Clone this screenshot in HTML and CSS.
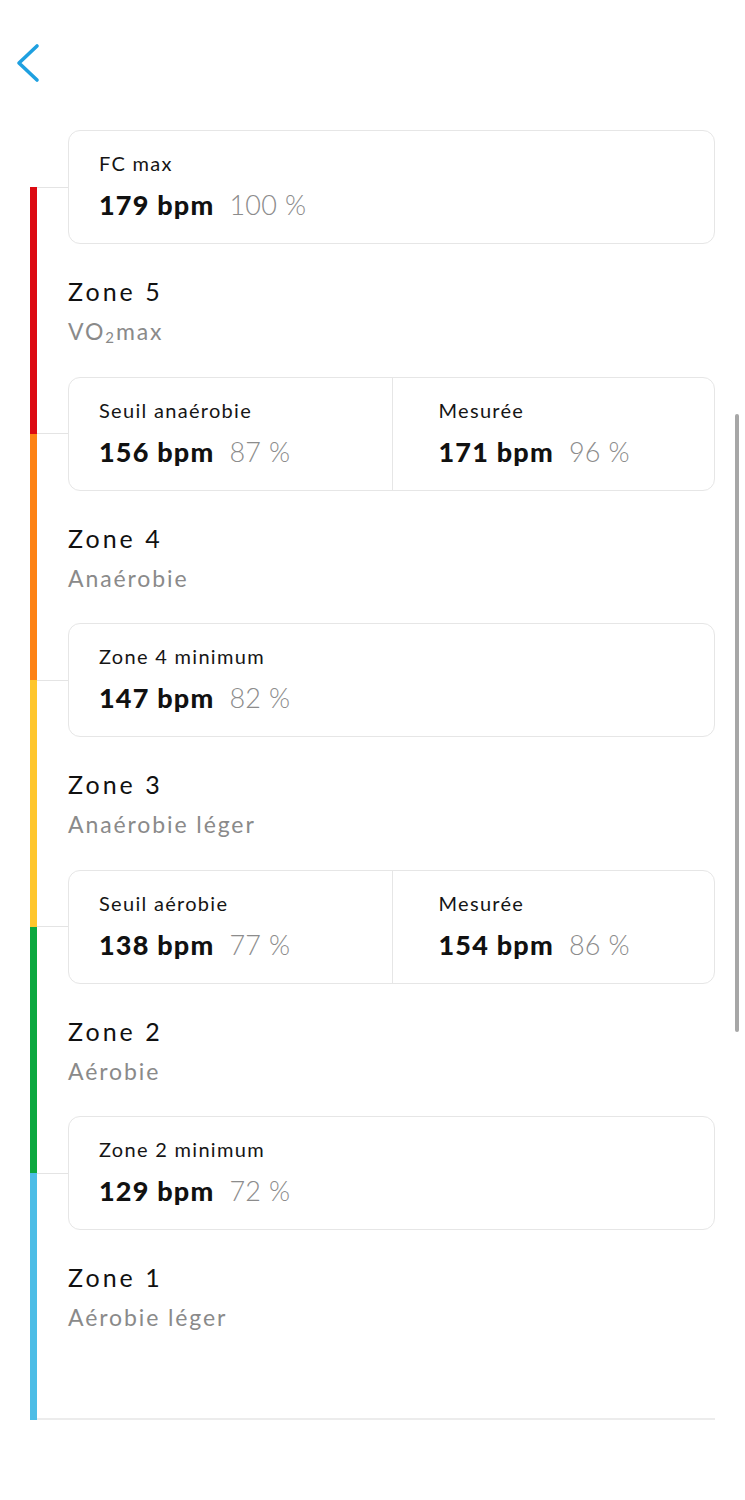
FILE: index.html
```html
<!DOCTYPE html>
<html lang="fr">
<head>
<meta charset="utf-8">
<title>Zones de fréquence cardiaque</title>
<link rel="stylesheet" href="styles.css">
</head>
<body>
<div class="screen">
  <header class="topbar">
    <button class="back" aria-label="Retour">
      <svg width="26" height="40" viewBox="0 0 26 40"><polyline points="22,3 4,20 22,37" fill="none" stroke="#1ea0e0" stroke-width="3.6" stroke-linecap="round" stroke-linejoin="round"/></svg>
    </button>
  </header>

  <section class="zones">
    <div class="row">
      <div class="rail a-none b-5"></div><div class="link"></div>
      <div class="card">
        <div class="cell"><div class="label">FC max</div><div class="value"><b>179 bpm</b><span class="pct">100 %</span></div></div>
      </div>
    </div>
    <div class="row">
      <div class="rail a-5 b-5"></div><div class="gap"></div>
      <div class="zone-head"><div class="zone-title">Zone 5</div><div class="zone-sub">VO<sub>2</sub>max</div></div>
    </div>
    <div class="row">
      <div class="rail a-5 b-4"></div><div class="link"></div>
      <div class="card">
        <div class="cell"><div class="label">Seuil anaérobie</div><div class="value"><b>156 bpm</b><span class="pct">87 %</span></div></div>
        <div class="cell"><div class="label">Mesurée</div><div class="value"><b>171 bpm</b><span class="pct">96 %</span></div></div>
      </div>
    </div>
    <div class="row">
      <div class="rail a-4 b-4"></div><div class="gap"></div>
      <div class="zone-head"><div class="zone-title">Zone 4</div><div class="zone-sub">Anaérobie</div></div>
    </div>
    <div class="row">
      <div class="rail a-4 b-3"></div><div class="link"></div>
      <div class="card">
        <div class="cell"><div class="label">Zone 4 minimum</div><div class="value"><b>147 bpm</b><span class="pct">82 %</span></div></div>
      </div>
    </div>
    <div class="row">
      <div class="rail a-3 b-3"></div><div class="gap"></div>
      <div class="zone-head"><div class="zone-title">Zone 3</div><div class="zone-sub">Anaérobie léger</div></div>
    </div>
    <div class="row">
      <div class="rail a-3 b-2"></div><div class="link"></div>
      <div class="card">
        <div class="cell"><div class="label">Seuil aérobie</div><div class="value"><b>138 bpm</b><span class="pct">77 %</span></div></div>
        <div class="cell"><div class="label">Mesurée</div><div class="value"><b>154 bpm</b><span class="pct">86 %</span></div></div>
      </div>
    </div>
    <div class="row">
      <div class="rail a-2 b-2"></div><div class="gap"></div>
      <div class="zone-head"><div class="zone-title">Zone 2</div><div class="zone-sub">Aérobie</div></div>
    </div>
    <div class="row">
      <div class="rail a-2 b-1"></div><div class="link"></div>
      <div class="card">
        <div class="cell"><div class="label">Zone 2 minimum</div><div class="value"><b>129 bpm</b><span class="pct">72 %</span></div></div>
      </div>
    </div>
    <div class="row">
      <div class="rail a-1 b-1"></div><div class="gap"></div>
      <div class="zone-head"><div class="zone-title">Zone 1</div><div class="zone-sub">Aérobie léger</div></div>
    </div>
    <div class="row">
      <div class="rail a-1 b-1"></div><div class="end-fill"></div>
    </div>
  </section>

  <p class="note">Les zones sont basées sur la FC max.</p>
</div>
<div class="scrollbar"></div>
</body>
</html>
```

FILE: styles.css
```css
html, body {
  margin: 0;
  padding: 0;
  background: #fff;
}
body {
  width: 745px;
  height: 1500px;
  overflow: hidden;
  font-family: Lato, "Open Sans", sans-serif;
  color: #111;
}
.screen {
  display: flex;
  flex-direction: column;
}
.topbar {
  height: 130px;
  display: flex;
  align-items: flex-start;
}
.back {
  margin: 43px 0 0 15px;
  padding: 0;
  border: 0;
  background: none;
  display: flex;
}
.zones {
  display: flex;
  flex-direction: column;
  padding: 0 30px;
}
.row {
  display: flex;
  align-items: stretch;
}
.rail {
  width: 7px;
  flex: none;
  background: linear-gradient(var(--a) 50%, var(--b) 50%);
}
.a-none { --a: transparent; }
.a-5 { --a: #dc0a12; } .b-5 { --b: #dc0a12; }
.a-4 { --a: #fd8215; } .b-4 { --b: #fd8215; }
.a-3 { --a: #fec62d; } .b-3 { --b: #fec62d; }
.a-2 { --a: #0ca83f; } .b-2 { --b: #0ca83f; }
.a-1 { --a: #4dbde6; } .b-1 { --b: #4dbde6; }
.link, .gap {
  width: 31px;
  flex: none;
}
.link {
  background: linear-gradient(#e4e4e4, #e4e4e4) center / 100% 1px no-repeat;
}
.card {
  flex: 1;
  display: grid;
  grid-auto-flow: column;
  grid-auto-columns: minmax(0, 1fr);
  border: 1px solid #e6e6e6;
  border-radius: 12px;
  background: #fff;
}
.cell {
  padding: 19px 0 22px 30px;
}
.cell + .cell {
  border-left: 1px solid #e6e6e6;
  padding-left: 46px;
}
.label {
  font-size: 20px;
  line-height: 26px;
  letter-spacing: 1.3px;
  margin-bottom: 13px;
  color: #151515;
}
.value {
  display: flex;
  align-items: baseline;
  gap: 15px;
  line-height: 32px;
  font-size: 27px;
}
.value b {
  font-weight: 900;
  letter-spacing: 1.2px;
}
.pct {
  font-weight: 300;
  letter-spacing: 0.3px;
  color: #8c8c8c;
}
.zone-head {
  flex: 1;
  padding: 31px 0 31.5px;
}
.zone-title {
  font-size: 25px;
  line-height: 32px;
  letter-spacing: 3px;
  margin-bottom: 10px;
  color: #111;
}
.zone-sub {
  font-size: 23px;
  line-height: 28px;
  letter-spacing: 1.9px;
  color: #8a8a8a;
}
.zone-sub sub {
  font-size: 15px;
  line-height: 0;
  vertical-align: -3px;
}
.end-fill {
  flex: 1;
  height: 55px;
  border-bottom: 2px solid #ececec;
}
.note {
  margin: 73px 0 0 68px;
  font-size: 20px;
  line-height: 26px;
  letter-spacing: 1.3px;
  color: #888;
}
.scrollbar {
  position: fixed;
  left: 735px;
  top: 414px;
  width: 4px;
  height: 618px;
  border-radius: 2px;
  background: #a7a7a7;
}
```
